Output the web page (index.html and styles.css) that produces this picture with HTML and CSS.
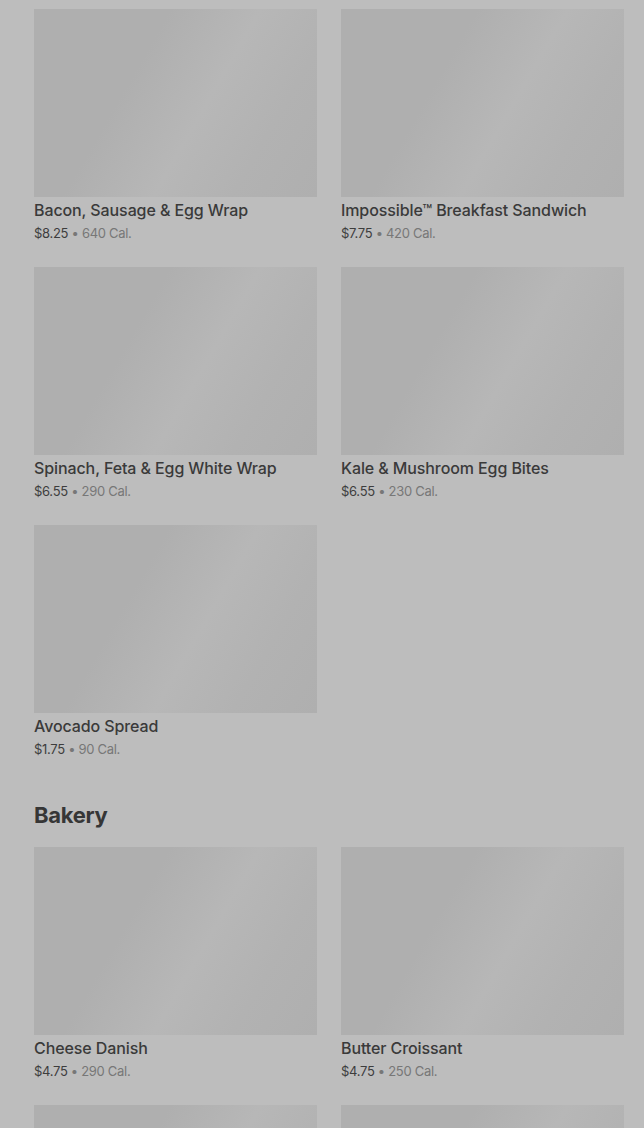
FILE: index.html
```html
<!DOCTYPE html>
<html>
  <head>
    <meta charset="UTF-8">
    <title>Menu</title>
    <meta name="viewport" content="width=device-width, initial-scale=1.0">
    <link rel="stylesheet" href="styles.css">
  </head>
  <body>
    <main class="menu">
      <section class="menu-section">
        <div class="item-grid">
          <div class="item">
            <div class="item-image"></div>
            <div class="item-title">Bacon, Sausage &amp; Egg Wrap</div>
            <div class="item-meta"><span class="price">$8.25</span> • 640 Cal.</div>
          </div>
          <div class="item">
            <div class="item-image"></div>
            <div class="item-title">Impossible™ Breakfast Sandwich</div>
            <div class="item-meta"><span class="price">$7.75</span> • 420 Cal.</div>
          </div>
          <div class="item">
            <div class="item-image"></div>
            <div class="item-title">Spinach, Feta &amp; Egg White Wrap</div>
            <div class="item-meta"><span class="price">$6.55</span> • 290 Cal.</div>
          </div>
          <div class="item">
            <div class="item-image"></div>
            <div class="item-title">Kale &amp; Mushroom Egg Bites</div>
            <div class="item-meta"><span class="price">$6.55</span> • 230 Cal.</div>
          </div>
          <div class="item">
            <div class="item-image"></div>
            <div class="item-title">Avocado Spread</div>
            <div class="item-meta"><span class="price">$1.75</span> • 90 Cal.</div>
          </div>
        </div>
      </section>

      <section class="menu-section">
        <h2 class="section-title">Bakery</h2>
        <div class="item-grid">
          <div class="item">
            <div class="item-image"></div>
            <div class="item-title">Cheese Danish</div>
            <div class="item-meta"><span class="price">$4.75</span> • 290 Cal.</div>
          </div>
          <div class="item">
            <div class="item-image"></div>
            <div class="item-title">Butter Croissant</div>
            <div class="item-meta"><span class="price">$4.75</span> • 250 Cal.</div>
          </div>
          <div class="item">
            <div class="item-image"></div>
          </div>
          <div class="item">
            <div class="item-image"></div>
          </div>
        </div>
      </section>
    </main>
  </body>
</html>
```

FILE: styles.css
```css
body {
    margin: 0;
    font-family: Inter, "Noto Sans", sans-serif;
    background-color: #bdbdbd;
    color: #3a3a3a;
    overflow: hidden;
}

.menu {
    padding: 9px 20px 0 34px;
}

.menu-section + .menu-section {
    margin-top: 40px;
}

.section-title {
    margin: 0 0 16px;
    font-size: 22px;
    line-height: 32px;
    font-weight: 700;
    color: #363636;
    letter-spacing: -0.3px;
}

.item-grid {
    display: grid;
    grid-template-columns: 1fr 1fr;
    column-gap: 24px;
    row-gap: 24px;
}

.item-image {
    height: 188px;
    background: linear-gradient(120deg, #afafaf 0%, #afafaf 35%, #b7b7b7 58%, #b2b2b2 78%, #afafaf 100%);
}

.item-title {
    margin-top: 1px;
    font-size: 16px;
    line-height: 24px;
    font-weight: 500;
    color: #3a3a3a;
    letter-spacing: -0.1px;
}

.item-meta {
    margin-top: 1px;
    font-size: 13px;
    line-height: 20px;
    color: #777;
    letter-spacing: -0.3px;
}

.price {
    color: #3d3d3d;
}
```
